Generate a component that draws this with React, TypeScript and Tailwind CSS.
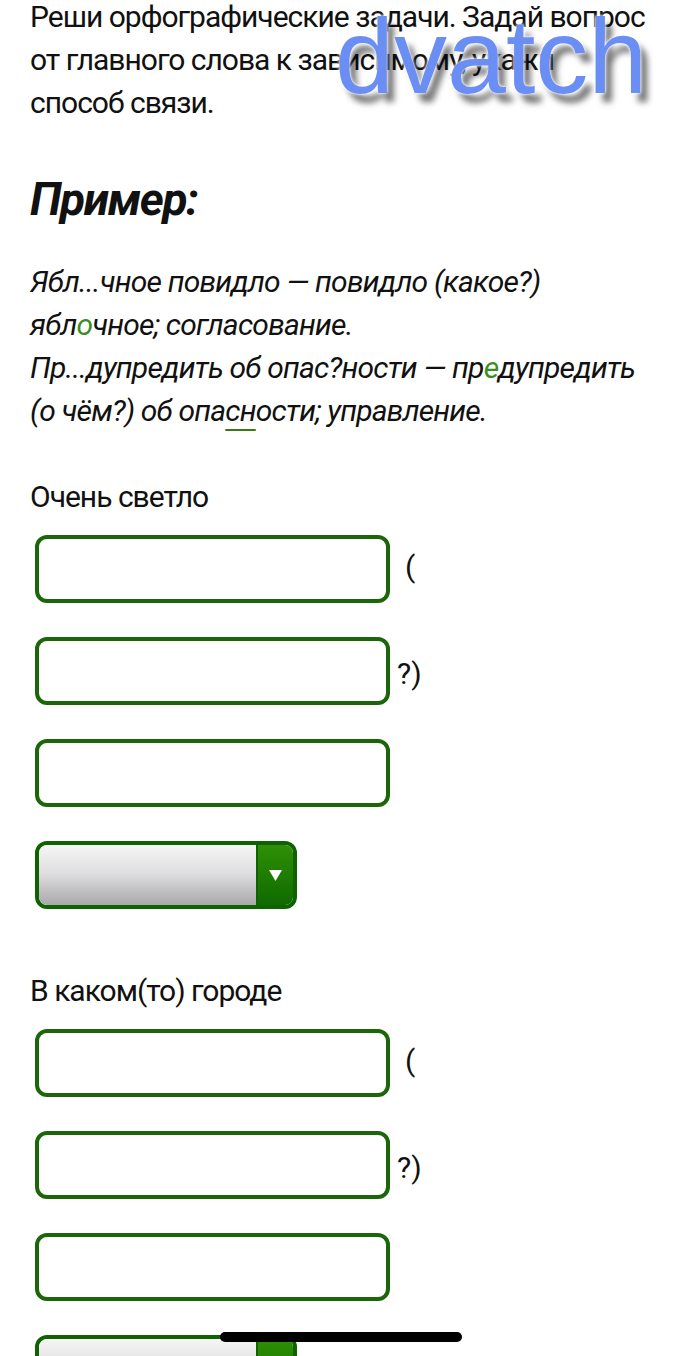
import React from "react";

const FONT = "font-['Roboto',_'Liberation_Sans',_sans-serif]";

function TextBox({ suffix, suffixClass }: { suffix?: string; suffixClass?: string }) {
  return (
    <div className="flex items-center">
      <div className="h-[68px] w-[355px] rounded-[12px] border-[4px] border-[#1a6608] bg-white" />
      {suffix && <span className={"text-[30px] leading-none text-[#111] " + (suffixClass ?? "")}>{suffix}</span>}
    </div>
  );
}

function SelectBox() {
  return (
    <div className="flex h-[68px] w-[262px] overflow-hidden rounded-[12px] border-[4px] border-[#0f6200]">
      <div className="flex-1 rounded-l-[8px] bg-gradient-to-b from-[#f6f6f6] via-[#dcdcdf] to-[#a9a9ab]" />
      <div className="flex w-[37px] items-center justify-center border-l-2 border-[#0f6200] bg-gradient-to-b from-[#2f8f06] to-[#0d6a00]">
        <svg width="13" height="11" viewBox="0 0 13 11">
          <path d="M0 0 L13 0 L6.5 11 Z" fill="#fff" />
        </svg>
      </div>
    </div>
  );
}

function Task({ label, first }: { label: string; first?: boolean }) {
  return (
    <section className={first ? "mt-[43px]" : "mt-[60px]"}>
      <p className="text-[30px] leading-[43px] tracking-[-1px]">{label}</p>
      <div className="mt-[17px] flex flex-col gap-[34px] pl-[5px]">
        <TextBox suffix="(" suffixClass="ml-[15px] -mt-[4px]" />
        <TextBox suffix="?)" suffixClass="ml-[7px] mt-[6px]" />
        <TextBox />
        <SelectBox />
      </div>
    </section>
  );
}

export default function App() {
  return (
    <div className={"relative h-[1356px] w-[680px] overflow-hidden bg-white text-[#111] " + FONT}>
      <div className="px-[30px]">
        <p className="-mt-[5px] whitespace-nowrap text-[30px] leading-[43px] tracking-[-1px]">
          Реши орфографические задачи. Задай вопрос
          <br />
          от главного слова к зависимому, укажи
          <br />
          способ связи.
        </p>

        <h2 className="mt-[47px] text-[46px] font-bold italic leading-[56px] tracking-[-1.5px]">Пример:</h2>

        <p className="mt-[33px] whitespace-nowrap text-[30px] italic leading-[43px] tracking-[-0.8px]">
          Ябл...чное повидло — повидло (какое?)
          <br />
          ябл<span className="text-[#3a8f1e]">о</span>чное; согласование.
          <br />
          Пр...дупредить об опас?ности — пр<span className="text-[#3a8f1e]">е</span>дупредить
          <br />
          (о чём?) об опа
          <span className="underline decoration-[#3a7a10] decoration-2 underline-offset-[8px]">сн</span>ости; управление.
        </p>

        <Task label="Очень светло" first />
        <Task label="В каком(то) городе" />
      </div>

      <div className="pointer-events-none absolute left-[335px] top-[3px] font-['Liberation_Sans',_Arial,_sans-serif] text-[106px] leading-none text-[#6a8ef3] [text-shadow:0_0_2px_#fff,0_0_4px_#fff,7px_9px_6px_rgba(0,0,0,0.55)]">
        dvatch
      </div>

      <div className="absolute left-[220px] top-[1332px] h-[10px] w-[242px] rounded-full bg-black" />
    </div>
  );
}
